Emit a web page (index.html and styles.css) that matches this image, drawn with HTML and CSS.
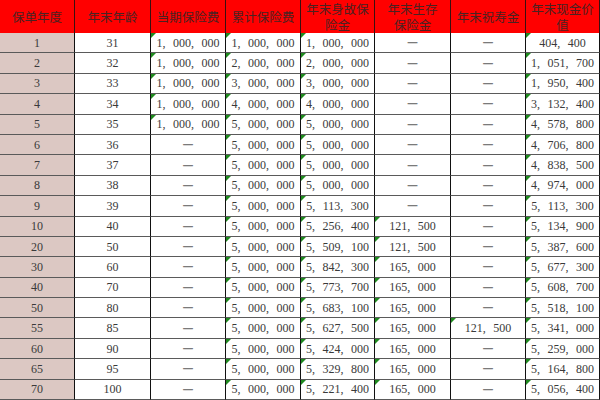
FILE: index.html
```html
<!DOCTYPE html>
<html lang="zh-CN">
<head>
<meta charset="utf-8">
<title>保单利益表</title>
<link rel="stylesheet" href="styles.css">
</head>
<body>
<div class="sheet">
  <div class="h">保单年度</div><div class="h">年末年龄</div><div class="h">当期保险费</div><div class="h">累计保险费</div><div class="h">年末身故保<br>险金</div><div class="h">年末生存<br>保险金</div><div class="h">年末祝寿金</div><div class="h">年末现金价<br>值</div>

  <div class="c y">1</div><div class="c">31</div><div class="c n">1, 000, 000</div><div class="c n">1, 000, 000</div><div class="c n">1, 000, 000</div><div class="c d">—</div><div class="c d">—</div><div class="c n">404, 400</div>
  <div class="c y">2</div><div class="c">32</div><div class="c n">1, 000, 000</div><div class="c n">2, 000, 000</div><div class="c n">2, 000, 000</div><div class="c d">—</div><div class="c d">—</div><div class="c n">1, 051, 700</div>
  <div class="c y">3</div><div class="c">33</div><div class="c n">1, 000, 000</div><div class="c n">3, 000, 000</div><div class="c n">3, 000, 000</div><div class="c d">—</div><div class="c d">—</div><div class="c n">1, 950, 400</div>
  <div class="c y">4</div><div class="c">34</div><div class="c n">1, 000, 000</div><div class="c n">4, 000, 000</div><div class="c n">4, 000, 000</div><div class="c d">—</div><div class="c d">—</div><div class="c n">3, 132, 400</div>
  <div class="c y">5</div><div class="c">35</div><div class="c n">1, 000, 000</div><div class="c n">5, 000, 000</div><div class="c n">5, 000, 000</div><div class="c d">—</div><div class="c d">—</div><div class="c n">4, 578, 800</div>
  <div class="c y">6</div><div class="c">36</div><div class="c d">—</div><div class="c n">5, 000, 000</div><div class="c n">5, 000, 000</div><div class="c d">—</div><div class="c d">—</div><div class="c n">4, 706, 800</div>
  <div class="c y">7</div><div class="c">37</div><div class="c d">—</div><div class="c n">5, 000, 000</div><div class="c n">5, 000, 000</div><div class="c d">—</div><div class="c d">—</div><div class="c n">4, 838, 500</div>
  <div class="c y">8</div><div class="c">38</div><div class="c d">—</div><div class="c n">5, 000, 000</div><div class="c n">5, 000, 000</div><div class="c d">—</div><div class="c d">—</div><div class="c n">4, 974, 000</div>
  <div class="c y">9</div><div class="c">39</div><div class="c d">—</div><div class="c n">5, 000, 000</div><div class="c n">5, 113, 300</div><div class="c d">—</div><div class="c d">—</div><div class="c n">5, 113, 300</div>
  <div class="c y">10</div><div class="c">40</div><div class="c d">—</div><div class="c n">5, 000, 000</div><div class="c n">5, 256, 400</div><div class="c n">121, 500</div><div class="c d">—</div><div class="c n">5, 134, 900</div>
  <div class="c y">20</div><div class="c">50</div><div class="c d">—</div><div class="c n">5, 000, 000</div><div class="c n">5, 509, 100</div><div class="c n">121, 500</div><div class="c d">—</div><div class="c n">5, 387, 600</div>
  <div class="c y">30</div><div class="c">60</div><div class="c d">—</div><div class="c n">5, 000, 000</div><div class="c n">5, 842, 300</div><div class="c n">165, 000</div><div class="c d">—</div><div class="c n">5, 677, 300</div>
  <div class="c y">40</div><div class="c">70</div><div class="c d">—</div><div class="c n">5, 000, 000</div><div class="c n">5, 773, 700</div><div class="c n">165, 000</div><div class="c d">—</div><div class="c n">5, 608, 700</div>
  <div class="c y">50</div><div class="c">80</div><div class="c d">—</div><div class="c n">5, 000, 000</div><div class="c n">5, 683, 100</div><div class="c n">165, 000</div><div class="c d">—</div><div class="c n">5, 518, 100</div>
  <div class="c y">55</div><div class="c">85</div><div class="c d">—</div><div class="c n">5, 000, 000</div><div class="c n">5, 627, 500</div><div class="c n">165, 000</div><div class="c n">121, 500</div><div class="c n">5, 341, 000</div>
  <div class="c y">60</div><div class="c">90</div><div class="c d">—</div><div class="c n">5, 000, 000</div><div class="c n">5, 424, 000</div><div class="c n">165, 000</div><div class="c d">—</div><div class="c n">5, 259, 000</div>
  <div class="c y">65</div><div class="c">95</div><div class="c d">—</div><div class="c n">5, 000, 000</div><div class="c n">5, 329, 800</div><div class="c n">165, 000</div><div class="c d">—</div><div class="c n">5, 164, 800</div>
  <div class="c y">70</div><div class="c">100</div><div class="c d">—</div><div class="c n">5, 000, 000</div><div class="c n">5, 221, 400</div><div class="c n">165, 000</div><div class="c d">—</div><div class="c n">5, 056, 400</div>
</div>
</body>
</html>
```

FILE: styles.css
```css
html, body {
  margin: 0;
  padding: 0;
  background: #ffffff;
}

.sheet {
  width: 600px;
  height: 400px;
  display: grid;
  grid-template-columns: 75px 76px 75px 75px 74px 76px 75px 74px;
  grid-template-rows: 33px repeat(18, 1fr);
  box-sizing: border-box;
}

.h {
  background: #ff0000;
  color: #4a2222;
  font-family: "Noto Sans CJK SC", sans-serif;
  font-size: 12.5px;
  line-height: 16px;
  text-align: center;
  display: flex;
  align-items: center;
  justify-content: center;
  border-right: 1px solid #3a1010;
  box-sizing: border-box;
  padding-top: 1px;
}

.c {
  position: relative;
  background: #ffffff;
  color: #3a3a3a;
  font-family: "Liberation Serif", serif;
  font-size: 12px;
  word-spacing: 4.5px;
  display: flex;
  align-items: center;
  justify-content: center;
  border-right: 1px solid #111111;
  border-bottom: 1px solid #5a5a5a;
  box-sizing: border-box;
  white-space: nowrap;
  padding-top: 1px;
}

.c.y {
  background: #dcc8c3;
}

.c.d {
  font-family: "DejaVu Sans", sans-serif;
  font-size: 11px;
  font-weight: 700;
  color: #7a7a7a;
  padding-top: 0;
}

.c.n::before {
  content: "";
  position: absolute;
  left: 0;
  top: 0;
  border-top: 5px solid #1f8a1f;
  border-right: 5px solid transparent;
}
```
